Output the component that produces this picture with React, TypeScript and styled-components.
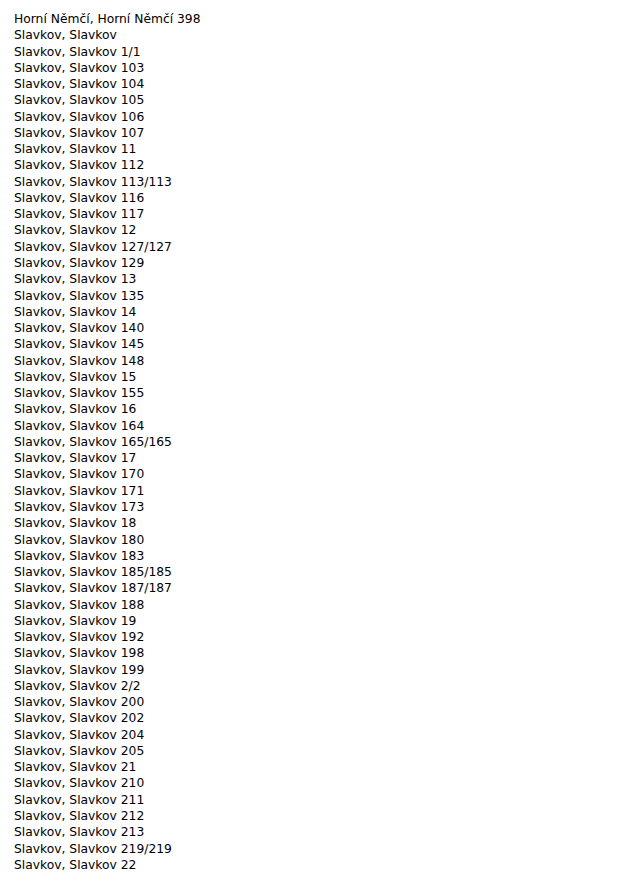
import { createGlobalStyle } from "styled-components";
import styled from "styled-components";

const numbers = ["1/1", "103", "104", "105", "106", "107", "11", "112", "113/113", "116", "117", "12", "127/127", "129", "13", "135", "14", "140", "145", "148", "15", "155", "16", "164", "165/165", "17", "170", "171", "173", "18", "180", "183", "185/185", "187/187", "188", "19", "192", "198", "199", "2/2", "200", "202", "204", "205", "21", "210", "211", "212", "213", "219/219", "22"];

const addresses = ["Horní Němčí, Horní Němčí 398", "Slavkov, Slavkov", ...numbers.map((n) => `Slavkov, Slavkov ${n}`)];

export default function App() {
	return (
		<>
			<GlobalStyle />
			<StyledList>
				{addresses.map((address) => (
					<StyledItem key={address}>{address}</StyledItem>
				))}
			</StyledList>
		</>
	);
}

const GlobalStyle = createGlobalStyle`
	body {
		margin: 0;
		background: #fff;
	}
`;
const StyledList = styled.ul`
	list-style: none;
	margin: 0;
	padding: 11px 0 0 14px;
	color: #000;
	font: 12.3px/16.27px "DejaVu Sans", sans-serif;
`;
const StyledItem = styled.li`
	white-space: nowrap;
`;
